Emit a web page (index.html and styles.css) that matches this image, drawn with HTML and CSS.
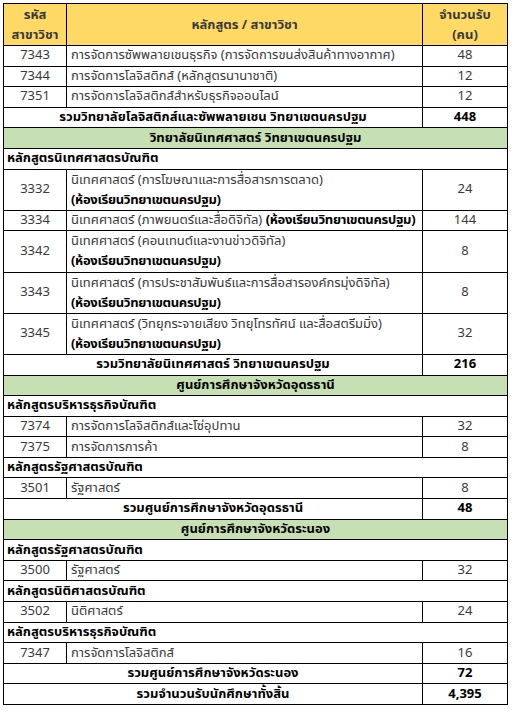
FILE: index.html
```html
<!DOCTYPE html>
<html lang="th">
<head>
<meta charset="utf-8">
<link rel="stylesheet" href="styles.css">
</head>
<body>
<table class="quota">
  <colgroup>
    <col class="c-code">
    <col class="c-name">
    <col class="c-num">
  </colgroup>
  <thead>
    <tr class="head">
      <th>รหัส<br>สาขาวิชา</th>
      <th>หลักสูตร / สาขาวิชา</th>
      <th>จำนวนรับ<br>(คน)</th>
    </tr>
  </thead>
  <tbody>
    <tr><td class="code">7343</td><td class="name">การจัดการซัพพลายเชนธุรกิจ (การจัดการขนส่งสินค้าทางอากาศ)</td><td class="num">48</td></tr>
    <tr><td class="code">7344</td><td class="name">การจัดการโลจิสติกส์ (หลักสูตรนานาชาติ)</td><td class="num">12</td></tr>
    <tr><td class="code">7351</td><td class="name">การจัดการโลจิสติกส์สำหรับธุรกิจออนไลน์</td><td class="num">12</td></tr>
    <tr class="total"><td colspan="2">รวมวิทยาลัยโลจิสติกส์และซัพพลายเชน วิทยาเขตนครปฐม</td><td class="num">448</td></tr>

    <tr class="section"><td colspan="3">วิทยาลัยนิเทศศาสตร์ วิทยาเขตนครปฐม</td></tr>
    <tr class="program"><td colspan="3">หลักสูตรนิเทศศาสตรบัณฑิต</td></tr>
    <tr class="dbl"><td class="code">3332</td><td class="name">นิเทศศาสตร์ (การโฆษณาและการสื่อสารการตลาด)<br><b>(ห้องเรียนวิทยาเขตนครปฐม)</b></td><td class="num">24</td></tr>
    <tr><td class="code">3334</td><td class="name">นิเทศศาสตร์ (ภาพยนตร์และสื่อดิจิทัล) <b>(ห้องเรียนวิทยาเขตนครปฐม)</b></td><td class="num">144</td></tr>
    <tr class="dbl"><td class="code">3342</td><td class="name">นิเทศศาสตร์ (คอนเทนต์และงานข่าวดิจิทัล)<br><b>(ห้องเรียนวิทยาเขตนครปฐม)</b></td><td class="num">8</td></tr>
    <tr class="dbl"><td class="code">3343</td><td class="name">นิเทศศาสตร์ (การประชาสัมพันธ์และการสื่อสารองค์กรมุ่งดิจิทัล)<br><b>(ห้องเรียนวิทยาเขตนครปฐม)</b></td><td class="num">8</td></tr>
    <tr class="dbl"><td class="code">3345</td><td class="name">นิเทศศาสตร์ (วิทยุกระจายเสียง วิทยุโทรทัศน์ และสื่อสตรีมมิ่ง)<br><b>(ห้องเรียนวิทยาเขตนครปฐม)</b></td><td class="num">32</td></tr>
    <tr class="total"><td colspan="2">รวมวิทยาลัยนิเทศศาสตร์ วิทยาเขตนครปฐม</td><td class="num">216</td></tr>

    <tr class="section"><td colspan="3">ศูนย์การศึกษาจังหวัดอุดรธานี</td></tr>
    <tr class="program"><td colspan="3">หลักสูตรบริหารธุรกิจบัณฑิต</td></tr>
    <tr><td class="code">7374</td><td class="name">การจัดการโลจิสติกส์และโซ่อุปทาน</td><td class="num">32</td></tr>
    <tr><td class="code">7375</td><td class="name">การจัดการการค้า</td><td class="num">8</td></tr>
    <tr class="program"><td colspan="3">หลักสูตรรัฐศาสตรบัณฑิต</td></tr>
    <tr><td class="code">3501</td><td class="name">รัฐศาสตร์</td><td class="num">8</td></tr>
    <tr class="total"><td colspan="2">รวมศูนย์การศึกษาจังหวัดอุดรธานี</td><td class="num">48</td></tr>

    <tr class="section"><td colspan="3">ศูนย์การศึกษาจังหวัดระนอง</td></tr>
    <tr class="program"><td colspan="3">หลักสูตรรัฐศาสตรบัณฑิต</td></tr>
    <tr><td class="code">3500</td><td class="name">รัฐศาสตร์</td><td class="num">32</td></tr>
    <tr class="program"><td colspan="3">หลักสูตรนิติศาสตรบัณฑิต</td></tr>
    <tr><td class="code">3502</td><td class="name">นิติศาสตร์</td><td class="num">24</td></tr>
    <tr class="program"><td colspan="3">หลักสูตรบริหารธุรกิจบัณฑิต</td></tr>
    <tr><td class="code">7347</td><td class="name">การจัดการโลจิสติกส์</td><td class="num">16</td></tr>
    <tr class="total"><td colspan="2">รวมศูนย์การศึกษาจังหวัดระนอง</td><td class="num">72</td></tr>
    <tr class="total"><td colspan="2">รวมจำนวนรับนักศึกษาทั้งสิ้น</td><td class="num">4,395</td></tr>
  </tbody>
</table>
</body>
</html>
```

FILE: styles.css
```css
html, body {
  margin: 0;
  padding: 0;
  background: #ffffff;
}

body {
  padding: 3px 0 0 3px;
  font-family: Tahoma, "Noto Sans Thai", "Noto Sans", "DejaVu Sans", sans-serif;
  font-size: 13px;
  color: #3a3a3a;
}

.quota {
  border-collapse: collapse;
  table-layout: fixed;
  width: 504px;
}

.c-code { width: 63px; }
.c-name { width: 356px; }
.c-num { width: 85px; }

.quota th,
.quota td {
  border: 1px solid #000;
  padding: 0 4px;
  line-height: 19px;
  vertical-align: middle;
  overflow: hidden;
  white-space: nowrap;
}

.quota tbody tr { height: 20.6px; }
.quota tbody tr.dbl { height: 41.2px; }

.head th {
  background: #ffd966;
  height: 41px;
  font-weight: bold;
  color: #3a3a3a;
  text-align: center;
  line-height: 20px;
}

.code { text-align: center; }
.num { text-align: center; }
.name { text-align: left; }
.name b { color: #000; font-weight: bold; letter-spacing: -0.3px; }
.dbl .name { line-height: 20px; }

.total td {
  font-weight: bold;
  color: #000;
  text-align: center;
}

.section td {
  background: #c6e0b4;
  font-weight: bold;
  color: #000;
  text-align: center;
}

.program td {
  font-weight: bold;
  color: #000;
  text-align: left;
  padding-left: 3px;
}
```
